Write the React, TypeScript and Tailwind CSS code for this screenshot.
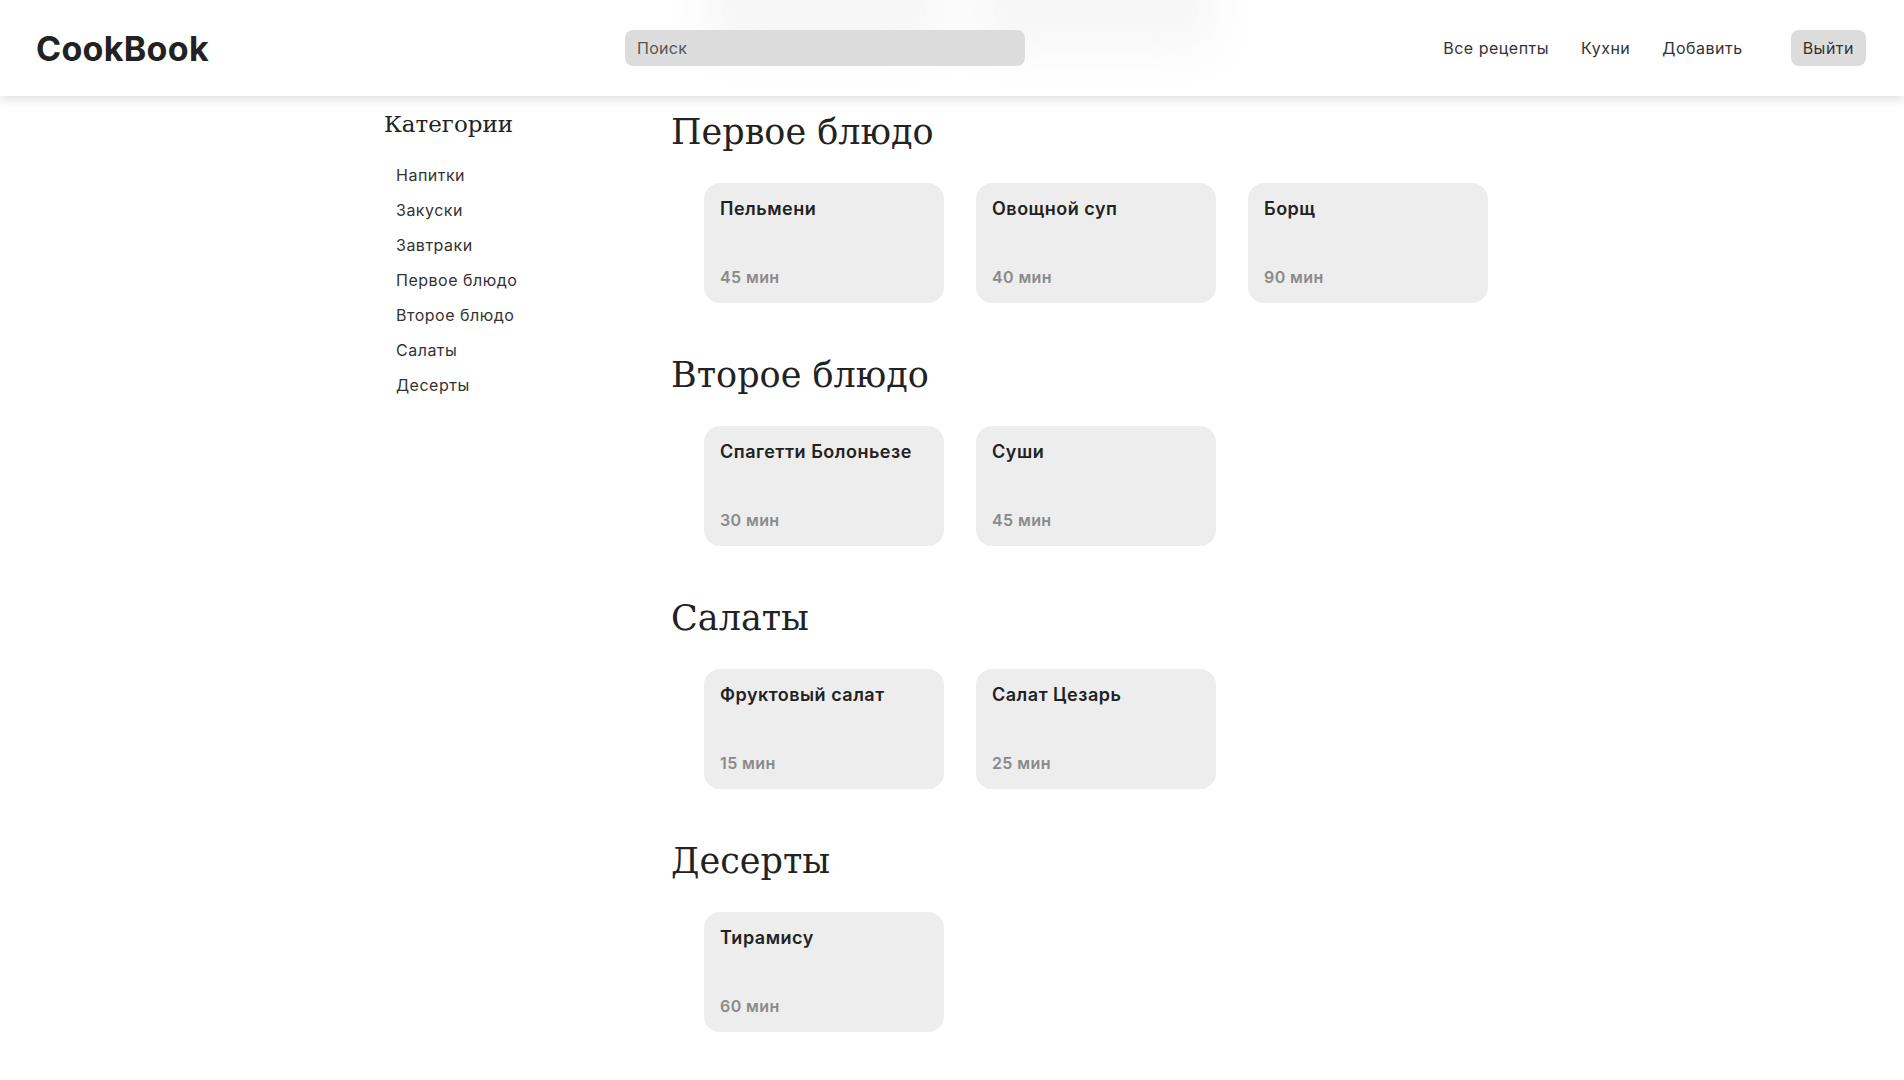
import React from 'react';

type Recipe = { title: string; time: number };

const categories = ['Напитки', 'Закуски', 'Завтраки', 'Первое блюдо', 'Второе блюдо', 'Салаты', 'Десерты'];

const sections: { name: string; recipes: Recipe[] }[] = [
  {
    name: 'Первое блюдо',
    recipes: [
      { title: 'Пельмени', time: 45 },
      { title: 'Овощной суп', time: 40 },
      { title: 'Борщ', time: 90 },
    ],
  },
  {
    name: 'Второе блюдо',
    recipes: [
      { title: 'Спагетти Болоньезе', time: 30 },
      { title: 'Суши', time: 45 },
    ],
  },
  {
    name: 'Салаты',
    recipes: [
      { title: 'Фруктовый салат', time: 15 },
      { title: 'Салат Цезарь', time: 25 },
    ],
  },
  {
    name: 'Десерты',
    recipes: [{ title: 'Тирамису', time: 60 }],
  },
];

const sans = "font-['Inter','Noto_Sans',sans-serif]";
const serif = "font-['DejaVu_Serif','Liberation_Serif',serif]";

function RecipeCard({ recipe }: { recipe: Recipe }) {
  return (
    <div className="w-[240px] h-[120px] rounded-2xl bg-[#ededed] p-4 flex flex-col justify-between">
      <p className="text-[18px] leading-5 font-semibold tracking-[0.5px] text-[#222]">{recipe.title}</p>
      <p className="text-[16px] leading-5 font-semibold tracking-[0.4px] text-[#8a8a8a]">{recipe.time} мин</p>
    </div>
  );
}

export default function App() {
  return (
    <div className={`min-h-screen bg-white ${sans}`}>
      {/* Header */}
      <header className="relative h-[96px] bg-white/90 shadow-[0_4px_10px_rgba(0,0,0,0.12)] overflow-hidden">
        {/* blurred cards scrolled under the header */}
        <div className="absolute left-[704px] top-[-70px] w-[240px] h-[120px] rounded-2xl bg-[#f6f6f6] blur-xl" />
        <div className="absolute left-[976px] top-[-70px] w-[240px] h-[120px] rounded-2xl bg-[#f6f6f6] blur-xl" />
        <div className="relative h-full flex items-center pl-[36px] pr-[38px]">
          <div className="w-[589px] text-[34px] font-bold text-[#222] tracking-[0.3px]">CookBook</div>
          <div className="w-[400px] h-[36px] rounded-lg bg-[#dcdcdc] flex items-center px-3 text-[16px] tracking-[0.3px] text-[#555]">
            Поиск
          </div>
          <nav className="ml-auto flex items-center text-[16px] tracking-[0.5px] text-[#333]">
            <a className="px-4">Все рецепты</a>
            <a className="px-4">Кухни</a>
            <a className="px-4">Добавить</a>
            <button className="ml-8 h-[36px] px-3 rounded-lg bg-[#dcdcdc] text-[#333] tracking-[0.5px]">Выйти</button>
          </nav>
        </div>
      </header>

      {/* Content */}
      <div className="flex pl-[384px] pt-[12px] pb-10">
        <aside className="w-[287px] shrink-0">
          <h2 className={`${serif} text-[23px] leading-8 text-[#222]`}>Категории</h2>
          <ul className="mt-[17px]">
            {categories.map((c) => (
              <li key={c} className="h-[35px] flex items-center pl-[12px] text-[16px] tracking-[0.5px] text-[#333]">
                {c}
              </li>
            ))}
          </ul>
        </aside>

        <main className="flex flex-col">
          {sections.map((s) => (
            <section key={s.name} className="mb-[48px]">
              <h1 className={`${serif} text-[35px] leading-[48px] text-[#222]`}>{s.name}</h1>
              <div className="mt-[27px] pl-[33px] flex gap-8">
                {s.recipes.map((r) => (
                  <RecipeCard key={r.title} recipe={r} />
                ))}
              </div>
            </section>
          ))}
        </main>
      </div>
    </div>
  );
}
